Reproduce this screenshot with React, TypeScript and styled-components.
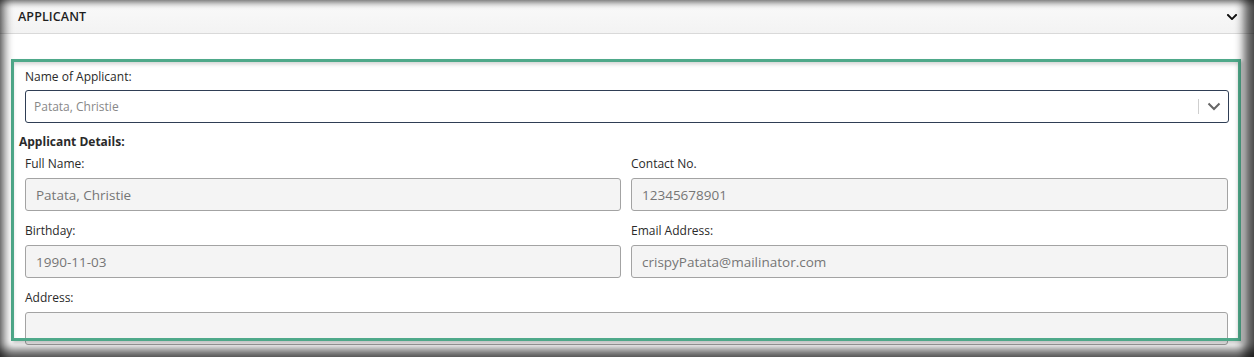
import { createGlobalStyle } from 'styled-components'
import styled from 'styled-components'
import { FaChevronDown } from 'react-icons/fa'

const Global = createGlobalStyle`
  html, body { margin: 0; padding: 0; background: #fff; }
  body { font-family: "Open Sans", "Noto Sans", Arial, sans-serif; color: #333; }
`

const Page = styled.div`
  position: relative; width: 1254px; height: 357px; overflow: hidden;
  background: #fff;
`
// dark edge of the captured window, drawn over everything
const Vignette = styled.div`
  position: absolute; inset: 0; pointer-events: none; z-index: 3;
  box-shadow:
    inset 10px 0 9px -5px rgba(0, 0, 0, 0.55),
    inset -15px 0 10px -5px rgba(0, 0, 0, 0.65),
    inset 0 -13px 9px -5px rgba(0, 0, 0, 0.6),
    inset 0 6px 6px -3px rgba(0, 0, 0, 0.45);
`
const Header = styled.div`
  display: flex; align-items: center; justify-content: space-between;
  height: 34px; padding: 0 16px 0 18px; box-sizing: border-box;
  background: linear-gradient(#fafafa, #f3f3f3);
  border-bottom: 1px solid #d9d9d9;
`
const Title = styled.div`
  font-size: 12.5px; font-weight: 600; color: #1e1e1e; letter-spacing: 0.1px;
`
const Body = styled.div`
  display: flex; flex-direction: column;
  padding: 34px 25px 0 25px;
`
const Label = styled.div<{ $bold?: boolean; $outdent?: boolean }>`
  font-size: 12px; line-height: 17px; color: #2a2a2a;
  font-weight: ${({ $bold }) => ($bold ? 700 : 400)};
  margin-left: ${({ $outdent }) => ($outdent ? '-6px' : '0')};
`
const Select = styled.div`
  display: flex; align-items: center; height: 33px; box-sizing: border-box;
  margin: 5px 0 10px; border: 1px solid #2f3e55; border-radius: 3px;
  padding-left: 8px; background: #fff;
`
const SelectValue = styled.div`
  flex: 1; font-size: 12px; color: #888;
`
const Separator = styled.div`
  width: 1px; height: 15px; background: #cfcfcf;
`
const Caret = styled.div`
  display: flex; align-items: center; justify-content: center;
  width: 29px; color: #666;
`
const Grid = styled.div`
  display: grid; grid-template-columns: 596px 597px; column-gap: 10px; row-gap: 11px;
  margin-top: 5px;
`
const Field = styled.div<{ $wide?: boolean }>`
  display: flex; flex-direction: column; gap: 6px;
  grid-column: ${({ $wide }) => ($wide ? '1 / -1' : 'auto')};
`
const Input = styled.div`
  height: 33px; box-sizing: border-box; display: flex; align-items: center;
  padding-left: 10px; border: 1px solid #a3a3a3; border-radius: 3px;
  background: #f4f4f4; font-size: 13.5px; color: #767676;
`
const Callout = styled.div`
  position: absolute; left: 11px; top: 59px; width: 1230px; height: 282px;
  box-sizing: border-box; border: 3px solid #4fa98a; z-index: 2; pointer-events: none;
  box-shadow: inset 0 3px 4px -1px rgba(0, 0, 0, 0.18), 2px 2px 3px rgba(0, 0, 0, 0.2);
`

const fields = [
  { label: 'Full Name:', value: 'Patata, Christie' },
  { label: 'Contact No.', value: '12345678901' },
  { label: 'Birthday:', value: '1990-11-03' },
  { label: 'Email Address:', value: 'crispyPatata@mailinator.com' },
]

export default function App() {
  return (
    <Page>
      <Global />
      <Header>
        <Title>APPLICANT</Title>
        <FaChevronDown size={12} color="#111" />
      </Header>
      <Body>
        <Label>Name of Applicant:</Label>
        <Select>
          <SelectValue>Patata, Christie</SelectValue>
          <Separator />
          <Caret>
            <svg width="14" height="9" viewBox="0 0 14 9">
              <path d="M1.5 1.5 L7 7 L12.5 1.5" fill="none" stroke="#666" strokeWidth="2" />
            </svg>
          </Caret>
        </Select>
        <Label $bold $outdent>Applicant Details:</Label>
        <Grid>
          {fields.map((f) => (
            <Field key={f.label}>
              <Label>{f.label}</Label>
              <Input>{f.value}</Input>
            </Field>
          ))}
          <Field $wide>
            <Label>Address:</Label>
            <Input />
          </Field>
        </Grid>
      </Body>
      <Callout />
      <Vignette />
    </Page>
  )
}
